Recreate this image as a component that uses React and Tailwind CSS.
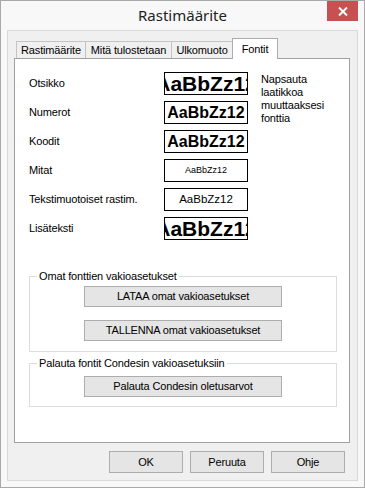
import React from 'react';

const ui = { fontFamily: '"Liberation Sans", Arial, sans-serif' };

const samples = [
  { label: 'Otsikko', cls: 'text-[21px] font-bold' },
  { label: 'Numerot', cls: 'text-[16px] font-bold' },
  { label: 'Koodit', cls: 'text-[16px] font-bold' },
  { label: 'Mitat', cls: 'text-[9px]' },
  { label: 'Tekstimuotoiset rastim.', cls: 'text-[11.5px]' },
  { label: 'Lisäteksti', cls: 'text-[21px] font-bold' },
];

const tabs = [
  { name: 'Rastimäärite', w: 'w-[70px]' },
  { name: 'Mitä tulostetaan', w: 'w-[87px]' },
  { name: 'Ulkomuoto', w: 'w-[62px]' },
];

const Button = ({ children, className = '' }) => (
  <button className={`flex items-center justify-center border border-[#adadad] bg-[#e5e5e5] text-[11px] text-black ${className}`}>
    {children}
  </button>
);

const Group = ({ title, children, className = '' }) => (
  <fieldset className={`mx-[14px] w-[308px] border border-[#dcdcdc] ${className}`}>
    <legend className="ml-[7px] px-[2px] text-[11px] leading-[13px] text-black">{title}</legend>
    {children}
  </fieldset>
);

export default function App() {
  return (
    <div style={ui} className="flex h-[488px] w-[365px] flex-col border border-[#a9a9a9] bg-[#f8f8f8] tracking-[-0.15px] text-black">
      {/* title bar */}
      <div className="grid h-[29px] grid-cols-[1fr_auto_1fr]">
        <div />
        <div style={{ fontFamily: '"Noto Sans", "Open Sans", sans-serif' }} className="self-center pb-[1px] text-[15px] tracking-normal text-[#222]">
          Rastimäärite
        </div>
        <div className="flex justify-end pr-[6px]">
          <div className="flex h-[20px] w-[31px] items-center justify-center bg-[#c75050]">
            <svg width="10" height="9" viewBox="0 0 10 9">
              <path d="M1 0.5 L9 8.5 M9 0.5 L1 8.5" stroke="#fff" strokeWidth="2" />
            </svg>
          </div>
        </div>
      </div>

      {/* client area */}
      <div className="mx-[6px] flex h-[451px] flex-col border border-[#d9d9d9] bg-[#f0f0f0] pl-[6px] pr-[7px] pt-[7px]">
        <div className="flex items-end pl-[2px]">
          {tabs.map((t) => (
            <div key={t.name} className={`flex h-[17px] items-center justify-center border border-b-0 border-[#c4c4c4] bg-[#f0f0f0] text-[11px] ${t.w} -mr-px`}>
              {t.name}
            </div>
          ))}
          <div className="relative z-10 -mb-px flex h-[21px] w-[46px] items-start justify-center border border-b-0 border-[#adadad] bg-white pt-[2px] text-[11px]">
            Fontit
          </div>
        </div>

        <div className="h-[385px] border border-[#a0a0a0] bg-white pt-[13px]">
          <div className="flex pl-[14px]">
            <div className="flex flex-col gap-[6px]">
              {samples.map((s) => (
                <div key={s.label} className="flex items-center">
                  <div className="w-[135px] text-[11px]">{s.label}</div>
                  <div className="flex h-[23px] w-[84px] items-center justify-center overflow-clip border border-black">
                    <span className={`shrink-0 whitespace-nowrap leading-none tracking-normal ${s.cls}`}>AaBbZz12</span>
                  </div>
                </div>
              ))}
            </div>
            <div className="ml-[13px] mt-[1px] text-[11px] leading-[13px]">
              Napsauta<br />laatikkoa<br />muuttaaksesi<br />fonttia
            </div>
          </div>

          <Group title="Omat fonttien vakioasetukset" className="mt-[30px] pb-[10px]">
            <div className="flex flex-col items-center gap-[13px] pt-[3px]">
              <Button className="h-[21px] w-[198px]">LATAA omat vakioasetukset</Button>
              <Button className="h-[21px] w-[198px]">TALLENNA omat vakioasetukset</Button>
            </div>
          </Group>

          <Group title="Palauta fontit Condesin vakioasetuksiin" className="mt-[5px] pb-[9px]">
            <div className="flex justify-center pt-[6px]">
              <Button className="h-[21px] w-[198px]">Palauta Condesin oletusarvot</Button>
            </div>
          </Group>
        </div>

        <div className="mt-[8px] flex justify-end gap-[7px] pr-[5px]">
          <Button className="h-[22px] w-[74px] border-[#3c8ce0]">OK</Button>
          <Button className="h-[22px] w-[74px]">Peruuta</Button>
          <Button className="h-[22px] w-[74px]">Ohje</Button>
        </div>
      </div>
    </div>
  );
}
